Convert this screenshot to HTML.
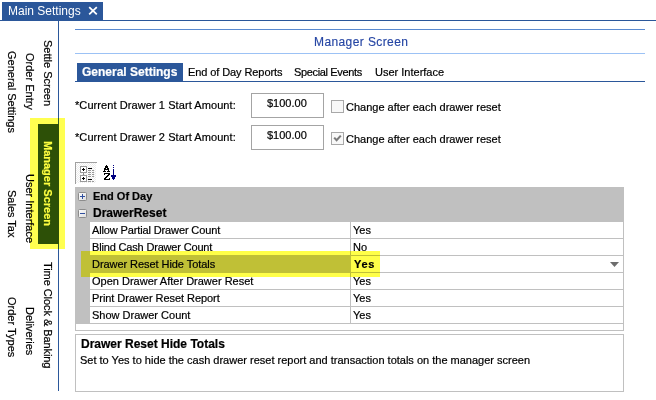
<!DOCTYPE html>
<html><head><meta charset="utf-8">
<style>
html,body{margin:0;padding:0;width:656px;height:400px;overflow:hidden;background:#fff;}
body{position:relative;font-family:"Liberation Sans",sans-serif;font-size:11px;color:#000;-webkit-text-stroke:0.2px currentColor;}
.a{position:absolute;}
.t{position:absolute;white-space:nowrap;line-height:13px;height:13px;}
.b{font-weight:bold;}
.rot{position:absolute;white-space:nowrap;line-height:13px;height:13px;transform-origin:0 0;transform:rotate(90deg);}
.row{position:absolute;left:90px;width:533px;height:16px;background:#fff;}
.nm{position:absolute;left:2px;top:2px;white-space:nowrap;line-height:13px;}
.vsep{position:absolute;left:260px;top:0;width:1px;height:16px;background:#c0c0c0;}
.vl{position:absolute;left:263px;top:2px;white-space:nowrap;line-height:13px;}
</style></head>
<body>
<!-- top doc tab -->
<div class="a" style="left:2px;top:2px;width:101px;height:18px;background:#2b579a;"></div>
<div class="a" style="left:0;top:20px;width:656px;height:1px;background:#2b579a;"></div>
<div class="t" style="left:8px;top:5px;font-size:12px;color:#fff;-webkit-text-stroke:0;">Main Settings</div>
<svg class="a" style="left:88px;top:6px" width="10" height="9" viewBox="0 0 10 9"><path d="M1.2 1.2 L8.8 8.3 M8.8 1.2 L1.2 8.3" stroke="#fff" stroke-width="1.8"/></svg>

<!-- left vertical tabs -->
<div class="a" style="left:58px;top:20px;width:1px;height:371px;background:#2b579a;"></div>
<div class="a" style="left:38px;top:124px;width:21px;height:120px;background:#2d5016;"></div>
<div class="a" style="left:30px;top:118px;width:35px;height:131px;background:#ffff50;mix-blend-mode:multiply;"></div>

<div class="rot" style="left:54px;top:40px;">Settle Screen</div>
<div class="rot b" style="left:54px;top:141px;color:#ffff40;">Manager Screen</div>
<div class="rot" style="left:54px;top:262px;letter-spacing:-0.07px;">Time Clock &amp; Banking</div>
<div class="rot" style="left:36px;top:53px;">Order Entry</div>
<div class="rot" style="left:36px;top:174px;">User Interface</div>
<div class="rot" style="left:36px;top:307px;">Deliveries</div>
<div class="rot" style="left:18px;top:51px;">General Settings</div>
<div class="rot" style="left:18px;top:190px;">Sales Tax</div>
<div class="rot" style="left:18px;top:297px;">Order Types</div>

<!-- header -->
<div class="a" style="left:75px;top:29px;width:570px;height:1px;background:#5a8ad0;"></div>
<div class="t" style="left:314px;top:36px;font-size:12px;letter-spacing:0.4px;color:#2646a4;-webkit-text-stroke:0.15px currentColor;">Manager Screen</div>
<div class="a" style="left:75px;top:53px;width:570px;height:1px;background:#9cc2f5;"></div>

<!-- tab strip -->
<div class="a" style="left:77px;top:63px;width:106px;height:18px;background:#2b579a;"></div>
<div class="a" style="left:75px;top:81px;width:570px;height:1px;background:#2b579a;"></div>
<div class="t b" style="left:82px;top:66px;font-size:12px;color:#fff;">General Settings</div>
<div class="t" style="left:188px;top:66px;letter-spacing:-0.09px;">End of Day Reports</div>
<div class="t" style="left:294px;top:66px;letter-spacing:-0.35px;">Special Events</div>
<div class="t" style="left:375px;top:66px;">User Interface</div>

<!-- form rows -->
<div class="t" style="left:75px;top:99px;letter-spacing:0.08px;">*Current Drawer 1 Start Amount:</div>
<div class="t" style="left:75px;top:131px;letter-spacing:0.08px;">*Current Drawer 2 Start Amount:</div>
<div class="a" style="left:251px;top:93px;width:71px;height:23px;border:1px solid #a4a4a4;"></div>
<div class="a" style="left:251px;top:125px;width:71px;height:23px;border:1px solid #a4a4a4;"></div>
<div class="t" style="left:267px;top:97px;">$100.00</div>
<div class="t" style="left:267px;top:129px;">$100.00</div>
<div class="a" style="left:331px;top:100px;width:11px;height:11px;border:1px solid #a8a8a8;background:#f8f8f8;"></div>
<div class="a" style="left:331px;top:132px;width:11px;height:11px;border:1px solid #a8a8a8;background:#f8f8f8;"></div>
<svg class="a" style="left:331px;top:132px" width="13" height="13"><path d="M3.2 5.6 L5.6 8.2 L9.8 3.6" stroke="#7a7a7a" stroke-width="2.1" fill="none"/></svg>
<div class="t" style="left:346px;top:101px;">Change after each drawer reset</div>
<div class="t" style="left:346px;top:133px;">Change after each drawer reset</div>

<!-- toolbar -->
<svg class="a" style="left:75px;top:162px" width="45" height="24" viewBox="75 162 45 24" shape-rendering="crispEdges">
<defs><pattern id="chk" x="0" y="0" width="2" height="2" patternUnits="userSpaceOnUse"><rect width="2" height="2" fill="#fff"/><rect width="1" height="1" fill="#ececec"/><rect x="1" y="1" width="1" height="1" fill="#ececec"/></pattern></defs>
<rect x="76" y="163" width="20" height="20" fill="url(#chk)"/>
<rect x="75" y="162" width="22" height="1" fill="#a0a0a0"/>
<rect x="75" y="162" width="1" height="22" fill="#a0a0a0"/>
<rect x="80.5" y="166.5" width="6" height="6" fill="#fff" stroke="#999"/>
<rect x="80.5" y="175.5" width="6" height="6" fill="#fff" stroke="#999"/>
<rect x="83" y="173" width="1" height="2" fill="#8c8c8c"/>
<path d="M82 169h3v1h-3zM83 168h1v3h-1zM82 178h3v1h-3zM83 177h1v3h-1z" fill="#000"/>
<path d="M88 168h4v1h-4zM88 179h4v1h-4z" fill="#000"/>
<path d="M88 170h3v1h-3zM92 170h2v1h-2zM88 172h3v1h-3zM92 172h2v1h-2zM88 174h3v1h-3zM92 174h2v1h-2zM88 176h3v1h-3zM92 176h2v1h-2zM88 181h3v1h-3zM92 181h2v1h-2z" fill="#9a9a9a"/>
<path d="M106 165h1v1h-1zM105 166h3v1h-3zM105 167h3v1h-3zM104 168h2v1h-2zM107 168h2v1h-2zM104 169h5v1h-5zM104 170h1v1h-1zM108 170h1v1h-1zM103 171h3v1h-3zM107 171h3v1h-3z" fill="#000"/>
<path d="M104 173h6v1h-6zM104 174h1v1h-1zM108 174h2v1h-2zM107 175h2v1h-2zM106 176h2v1h-2zM105 177h2v1h-2zM104 178h2v1h-2zM109 178h1v1h-1zM104 179h6v1h-6z" fill="#000"/>
<path d="M113 165h1v1h-1zM113 167h1v1h-1zM113 169h1v1h-1zM113 170h1v1h-1zM113 171h1v1h-1zM113 172h1v1h-1zM113 173h1v1h-1zM113 174h1v1h-1zM111 175h5v1h-5zM111 176h5v1h-5zM112 177h3v1h-3zM112 178h3v1h-3zM113 179h1v1h-1z" fill="#000080"/>
</svg>

<!-- grid -->
<div class="a" style="left:75px;top:187px;width:547px;height:142px;border:1px solid #c0c0c0;background:#c0c0c0;"></div>
<div class="a" style="left:76px;top:324px;width:547px;height:6px;background:#fff;"></div>
<svg class="a" style="left:78px;top:192px" width="9" height="26" viewBox="0 0 9 26">
<defs><linearGradient id="pg" x1="0" y1="0" x2="1" y2="1"><stop offset="0" stop-color="#fff"/><stop offset="1" stop-color="#dcdcdc"/></linearGradient></defs>
<rect x="0.5" y="0.5" width="8" height="8" rx="1" fill="url(#pg)" stroke="#8c8c8c"/>
<path d="M2 4.5 H7 M4.5 2 V7" stroke="#2f4f9f" stroke-width="1"/>
<rect x="0.5" y="17.5" width="8" height="8" rx="1" fill="url(#pg)" stroke="#8c8c8c"/>
<path d="M2 21.5 H7" stroke="#2f4f9f" stroke-width="1"/>
</svg>
<div class="t b" style="left:93px;top:190px;">End Of Day</div>
<div class="t b" style="left:93px;top:207px;font-size:12px;">DrawerReset</div>

<div class="row" style="top:222px;"><div class="vsep"></div><span class="nm" style="letter-spacing:-0.13px">Allow Partial Drawer Count</span><span class="vl">Yes</span></div>
<div class="row" style="top:239px;"><div class="vsep"></div><span class="nm" style="letter-spacing:-0.17px">Blind Cash Drawer Count</span><span class="vl">No</span></div>
<div class="row" style="top:255px;height:18px;background:transparent;"><div class="a" style="left:261px;top:1px;width:272px;height:16px;background:#fff;"></div><span class="nm" style="top:3px;letter-spacing:-0.06px">Drawer Reset Hide Totals</span><span class="vl b" style="top:3px;left:264px;letter-spacing:0.7px">Yes</span>
<svg class="a" style="left:520px;top:7px" width="9" height="5"><path d="M0 0 H9 L4.5 5 Z" fill="#6d6d6d"/></svg></div>
<div class="row" style="top:273px;"><div class="vsep"></div><span class="nm">Open Drawer After Drawer Reset</span><span class="vl">Yes</span></div>
<div class="row" style="top:290px;"><div class="vsep"></div><span class="nm" style="letter-spacing:-0.05px">Print Drawer Reset Report</span><span class="vl">Yes</span></div>
<div class="row" style="top:307px;"><div class="vsep"></div><span class="nm">Show Drawer Count</span><span class="vl">Yes</span></div>
<!-- highlight -->
<div class="a" style="left:81px;top:251px;width:299px;height:26px;background:#ffff48;mix-blend-mode:multiply;"></div>

<!-- description -->
<div class="a" style="left:75px;top:334px;width:547px;height:56px;border:1px solid #c0c0c0;"></div>
<div class="t b" style="left:81px;top:338px;font-size:12px;">Drawer Reset Hide Totals</div>
<div class="t" style="left:80px;top:354px;">Set to Yes to hide the cash drawer reset report and transaction totals on the manager screen</div>
</body></html>
